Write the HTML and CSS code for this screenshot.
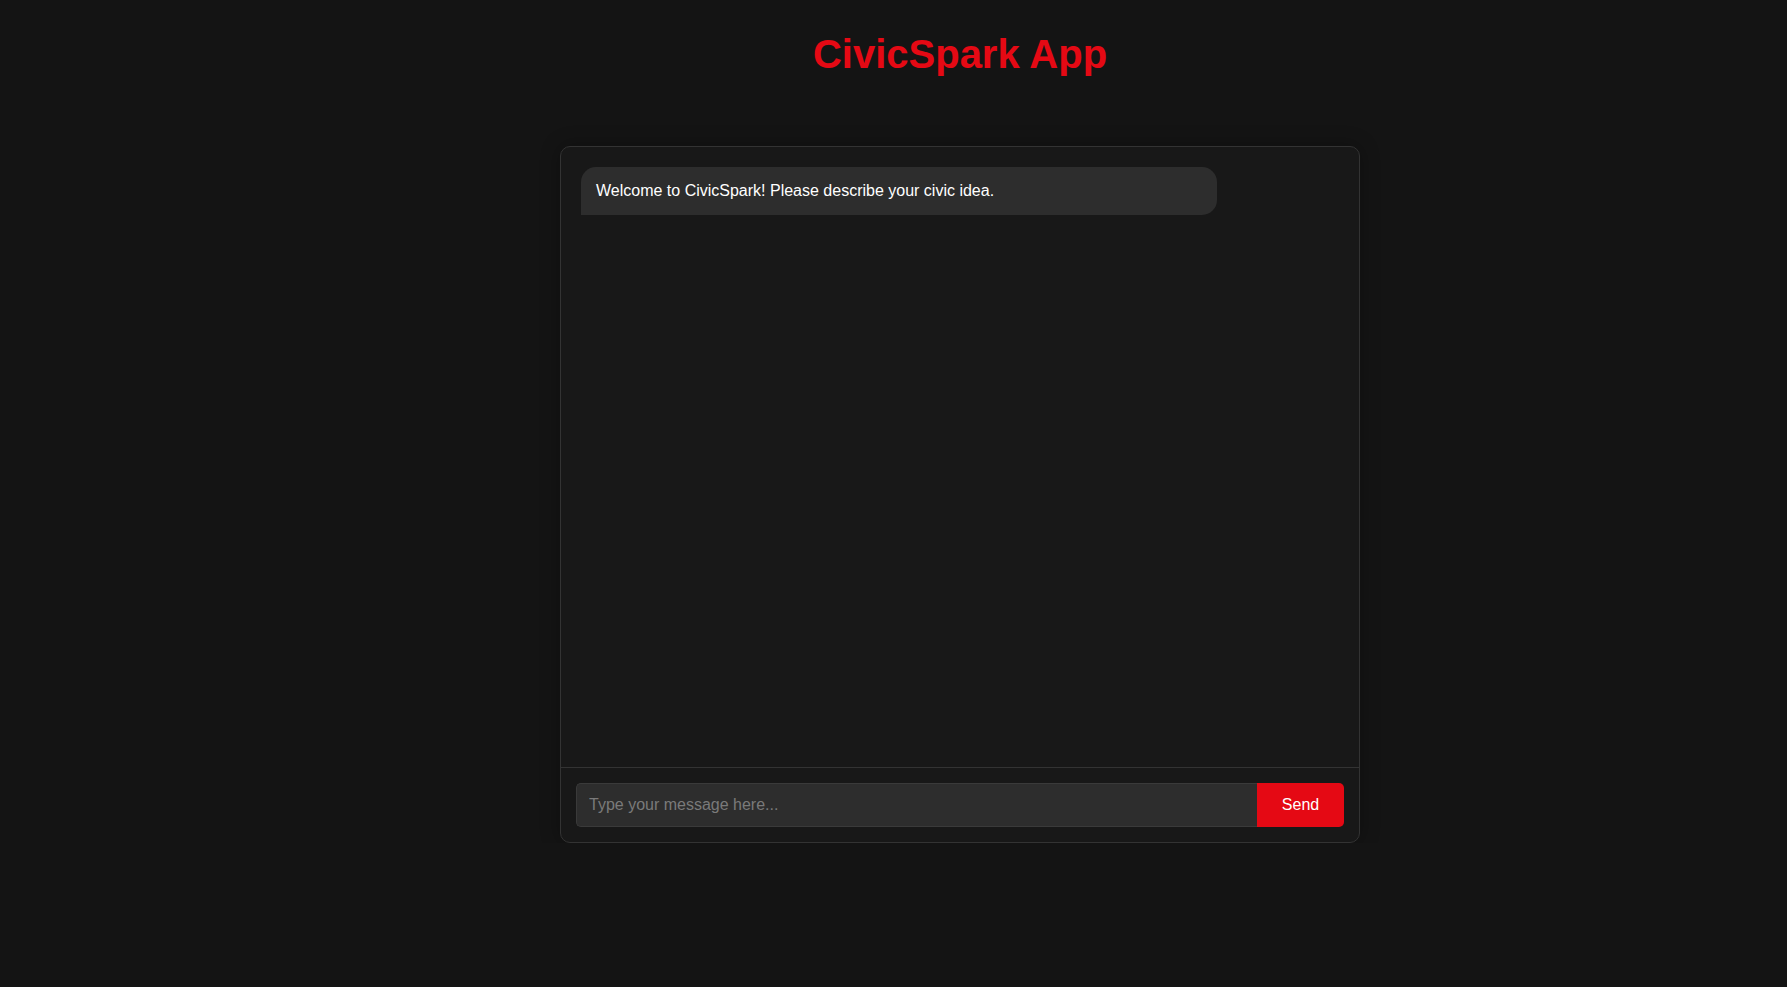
FILE: index.html
```html
<!DOCTYPE html>
<html lang="en">
<head>
    <meta charset="UTF-8">
    <meta name="viewport" content="width=device-width, initial-scale=1.0">
    <title>CivicSpark App</title>
    <link rel="stylesheet" href="styles.css">
</head>
<body>
    <div class="page">
        <header class="app-header">
            <h1>CivicSpark App</h1>
        </header>

        <div class="chat-container">
            <div class="chat-messages" id="chatMessages">
                <div class="message bot-message">Welcome to CivicSpark! Please describe your civic idea.</div>
            </div>
            <div class="chat-input">
                <input type="text" id="messageInput" placeholder="Type your message here...">
                <button id="sendButton">Send</button>
            </div>
        </div>
    </div>
</body>
</html>
```

FILE: styles.css
```css
body {
    font-family: "Liberation Sans", Arial, sans-serif;
    margin: 0;
    padding: 0;
    background-color: #141414;
    color: #ffffff;
}
.page {
    padding-left: 133px;
}
.app-header {
    padding-top: 32px;
    text-align: center;
}
.app-header h1 {
    margin: 0;
    font-size: 40px;
    font-weight: bold;
    color: #e50914;
}
.chat-container {
    width: 800px;
    margin: 69px auto 0;
    box-sizing: border-box;
    background-color: #181818;
    border: 1px solid #333333;
    border-radius: 10px;
    display: flex;
    flex-direction: column;
    box-shadow: 0 0 20px rgba(0, 0, 0, 0.3);
}
.chat-messages {
    height: 620px;
    box-sizing: border-box;
    padding: 20px;
    overflow-y: auto;
}
.message {
    max-width: 80%;
    padding: 15px;
    margin-bottom: 10px;
    font-size: 16px;
}
.bot-message {
    background-color: #2d2d2d;
    border-radius: 15px 15px 15px 0;
}
.chat-input {
    display: flex;
    padding: 15px;
    border-top: 1px solid #333333;
}
.chat-input input {
    flex: 1;
    padding: 12px;
    font-family: inherit;
    font-size: 16px;
    background-color: #2d2d2d;
    color: #ffffff;
    border: 1px solid #3a3a3a;
    border-right: none;
    border-radius: 5px 0 0 5px;
    outline: none;
}
.chat-input input::placeholder {
    color: #7a7a7a;
}
.chat-input button {
    width: 87px;
    background-color: #e50914;
    color: #ffffff;
    border: none;
    border-radius: 0 5px 5px 0;
    font-family: inherit;
    font-size: 16px;
    cursor: pointer;
}
```
